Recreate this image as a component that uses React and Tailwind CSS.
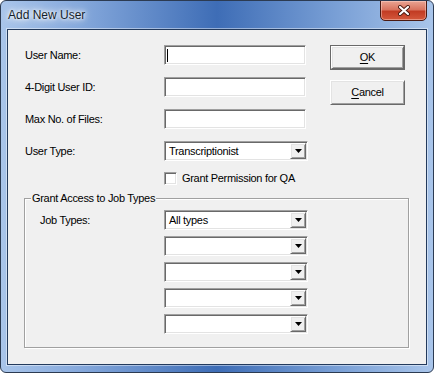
const sunken =
  'border border-t-[#a0a0a0] border-l-[#a0a0a0] border-b-white border-r-white shadow-[inset_1px_1px_0_#696969,inset_-1px_-1px_0_#e3e3e3] bg-white';
const raised =
  'border border-t-white border-l-white border-b-[#696969] border-r-[#696969] shadow-[inset_1px_1px_0_#e3e3e3,inset_-1px_-1px_0_#a0a0a0] bg-[#f0f0f0]';

function TextField({ caret = false }) {
  return (
    <div className={`w-[142px] h-[20px] flex items-center pl-[2px] ${sunken}`}>
      {caret && <span className="block w-[1px] h-[13px] bg-black" />}
    </div>
  );
}

function Combo({ value = '' }) {
  return (
    <div className={`w-[144px] h-[20px] flex items-center p-[1px] ${sunken}`}>
      <span className="flex-1 pl-[3px] leading-[16px] text-black truncate">{value}</span>
      <div className={`w-[16px] h-[16px] flex items-center justify-center ${raised}`}>
        <svg width="7" height="4" viewBox="0 0 7 4">
          <polygon points="0,0 7,0 3.5,4" fill="#000" />
        </svg>
      </div>
    </div>
  );
}

function Row({ label, children }) {
  return (
    <div className="h-[20px] flex items-center">
      <span className="w-[139px] text-black">{label}</span>
      {children}
    </div>
  );
}

export default function App() {
  return (
    <div
      className="w-[434px] h-[373px] rounded-[6px] border border-[#2c3b52] bg-[linear-gradient(90deg,#a9c5ea_0%,#86a9dc_18%,#3e6db6_50%,#7aa0d6_78%,#a9c5ea_100%)] flex flex-col overflow-hidden"
      style={{ fontFamily: '"Liberation Sans", Arial, sans-serif' }}
    >
      {/* title bar */}
      <div className="h-[28px] flex items-start justify-between">
        <span className="mt-[6px] ml-[7px] text-[12px] leading-[16px] text-[#141e2b] [text-shadow:0_0_6px_#fff,0_0_10px_#fff,0_0_3px_#fff]">
          Add New User
        </span>
        <button
          type="button"
          className="mr-[6px] mt-[-1px] w-[47px] h-[21px] rounded-b-[5px] border border-[#4a1a12] bg-[linear-gradient(180deg,#e9a493_0%,#d9745f_45%,#c23c24_55%,#d4583c_100%)] shadow-[inset_0_0_0_1px_rgba(255,220,210,0.45)] flex items-center justify-center"
        >
          <svg width="12" height="11" viewBox="0 0 12 11">
            <path d="M2 2 L10 9 M10 2 L2 9" stroke="#4a1a12" strokeWidth="4" strokeLinecap="round" />
            <path d="M2 2 L10 9 M10 2 L2 9" stroke="#fff" strokeWidth="2.2" strokeLinecap="round" />
          </svg>
        </button>
      </div>

      {/* client area */}
      <div className="mx-[6px] h-[336px] border border-[#233a5c] shadow-[0_0_0_1px_rgba(255,255,255,0.45)] bg-[#f0f0f0] text-[11px] leading-[13px] tracking-[-0.3px] pt-[15px]">
        <div className="flex pl-[17px]">
          <div className="w-[283px] flex flex-col">
            <div className="flex flex-col gap-[12px]">
              <Row label="User Name:">
                <TextField caret />
              </Row>
              <Row label="4-Digit User ID:">
                <TextField />
              </Row>
              <Row label="Max No. of Files:">
                <TextField />
              </Row>
              <Row label="User Type:">
                <Combo value="Transcriptionist" />
              </Row>
            </div>
            <div className="ml-[139px] mt-[11px] h-[13px] flex items-center gap-[5px]">
              <span className={`block w-[13px] h-[13px] ${sunken}`} />
              <span className="text-black">Grant Permission for QA</span>
            </div>
          </div>

          <div className="ml-[22px] flex flex-col gap-[10px]">
            <button
              type="button"
              className="w-[75px] h-[25px] border border-[#696969] p-0"
            >
              <span className={`w-full h-full flex items-center justify-center text-black ${raised}`}>
                <span className="underline underline-offset-[2px]">O</span>K
              </span>
            </button>
            <button
              type="button"
              className={`w-[75px] h-[25px] flex items-center justify-center text-black ${raised}`}
            >
              <span className="underline underline-offset-[2px]">C</span>ancel
            </button>
          </div>
        </div>

        {/* group box */}
        <div className="relative ml-[16px] mt-[13px] w-[385px] h-[150px] border border-[#a0a0a0] shadow-[inset_1px_1px_0_#fff,1px_1px_0_#fff] pt-[11px]">
          <span className="absolute left-[6px] top-[-7px] px-[1px] bg-[#f0f0f0] text-black leading-[13px]">
            Grant Access to Job Types
          </span>
          <div className="flex">
            <div className="w-[139px] pl-[15px] h-[20px] flex items-center text-black">Job Types:</div>
            <div className="flex flex-col gap-[6px]">
              <Combo value="All types" />
              <Combo />
              <Combo />
              <Combo />
              <Combo />
            </div>
          </div>
        </div>
      </div>
    </div>
  );
}
